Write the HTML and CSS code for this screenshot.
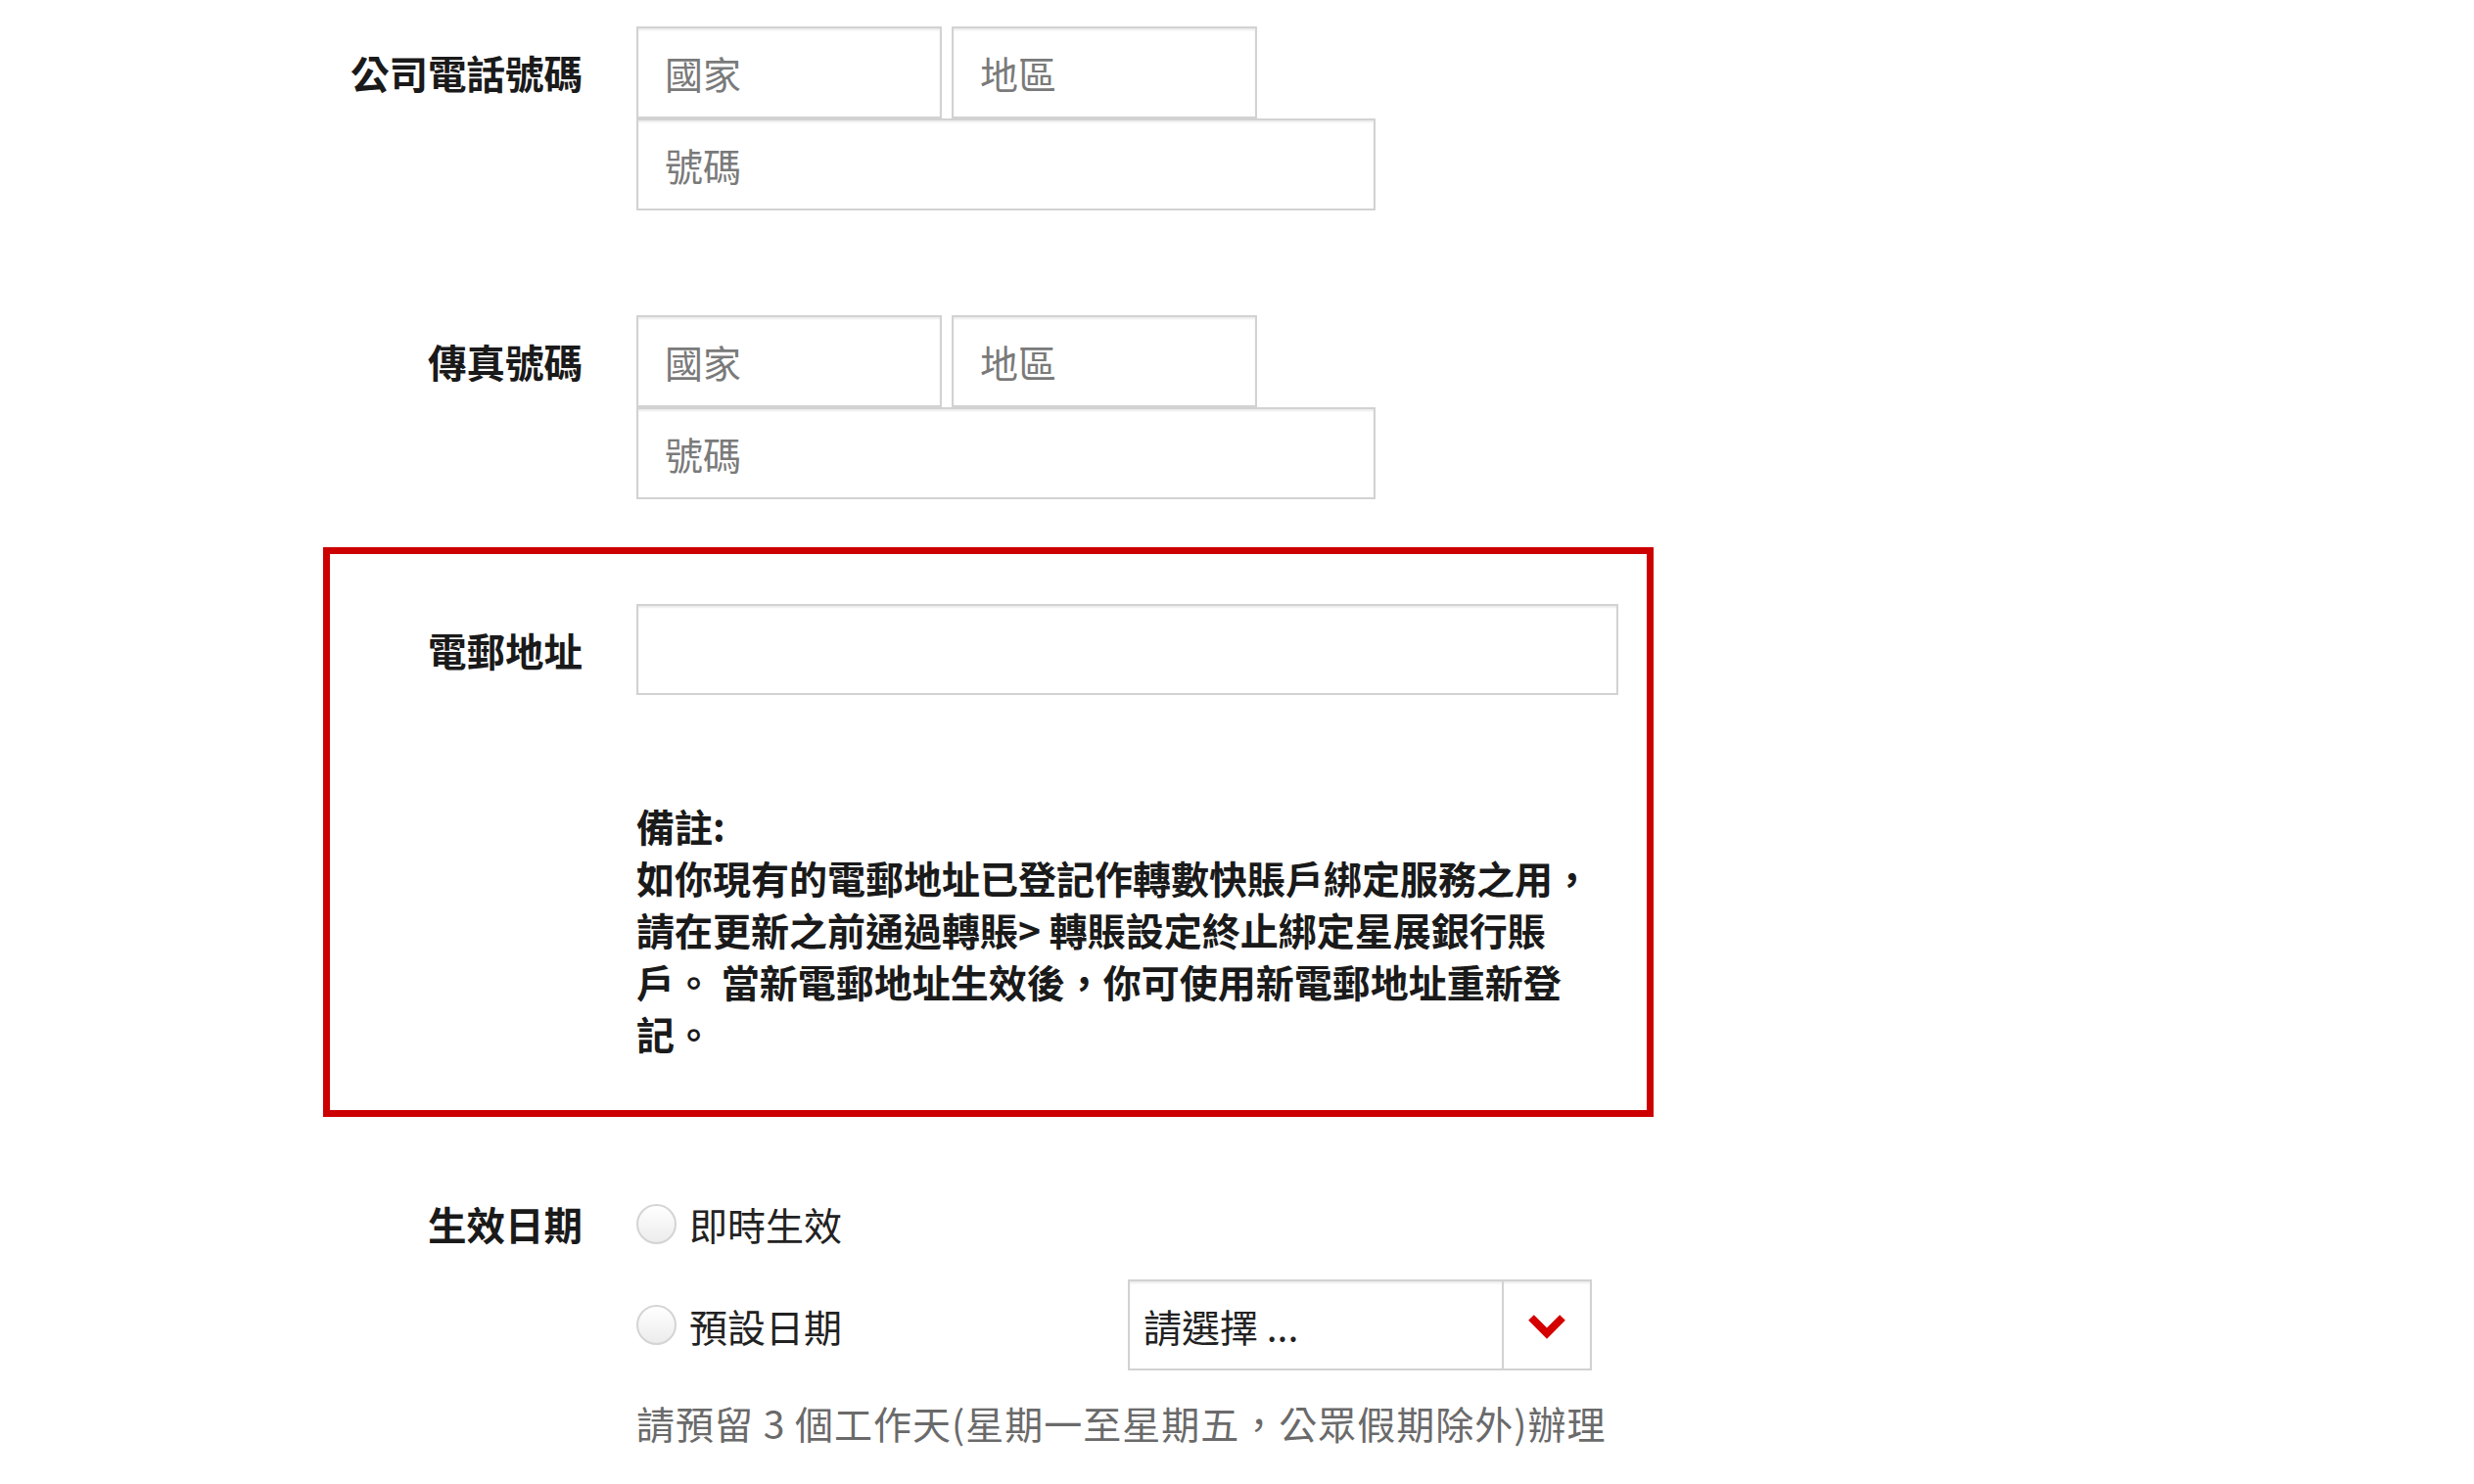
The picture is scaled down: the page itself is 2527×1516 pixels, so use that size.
FILE: index.html
```html
<!DOCTYPE html>
<html lang="zh-Hant">
<head>
  <meta charset="UTF-8" />
  <meta name="viewport" content="width=device-width, initial-scale=1.0"/>
  <title>更新聯絡資料</title>
  <link rel="stylesheet" href="styles.css">
</head>
<body>
  <form class="form">
    <div class="row">
      <label class="row-label">公司電話號碼</label>
      <div class="fields">
        <div class="phone-top">
          <input class="field short" type="text" placeholder="國家" />
          <input class="field short" type="text" placeholder="地區" />
        </div>
        <input class="field medium" type="text" placeholder="號碼" />
      </div>
    </div>

    <div class="row row-fax">
      <label class="row-label">傳真號碼</label>
      <div class="fields">
        <div class="phone-top">
          <input class="field short" type="text" placeholder="國家" />
          <input class="field short" type="text" placeholder="地區" />
        </div>
        <input class="field medium" type="text" placeholder="號碼" />
      </div>
    </div>

    <div class="highlight">
      <div class="row">
        <label class="row-label" for="email">電郵地址</label>
        <div class="fields">
          <input class="field wide" id="email" type="text" />
        </div>
      </div>
      <div class="note">
        備註:<br />
        如你現有的電郵地址已登記作轉數快賬戶綁定服務之用，請在更新之前通過轉賬&gt; 轉賬設定終止綁定星展銀行賬戶。 當新電郵地址生效後，你可使用新電郵地址重新登記。
      </div>
    </div>

    <div class="row row-date">
      <label class="row-label date-label">生效日期</label>
      <div class="fields">
        <label class="option">
          <input type="radio" name="effective" class="radio" />
          <span>即時生效</span>
        </label>
        <div class="option-row">
          <label class="option option-fixed">
            <input type="radio" name="effective" class="radio" />
            <span>預設日期</span>
          </label>
          <div class="select">
            <span class="select-text">請選擇 ...</span>
            <span class="select-arrow">
              <svg width="38" height="28" viewBox="0 0 38 28"><path d="M3 4 L19 20 L35 4" fill="none" stroke="#d40000" stroke-width="8" stroke-linejoin="miter"/></svg>
            </span>
          </div>
        </div>
        <div class="hint">請預留 3 個工作天(星期一至星期五，公眾假期除外)辦理</div>
      </div>
    </div>
  </form>
</body>
</html>
```

FILE: styles.css
```css
* {
  box-sizing: border-box;
}
body {
  margin: 0;
  background: #ffffff;
  font-family: "Noto Sans CJK TC", "Noto Sans", sans-serif;
  font-size: 39px;
  color: #222;
}
.form {
  width: 1359px;
  margin-left: 330px;
  padding-top: 27px;
}
.row {
  display: grid;
  grid-template-columns: 265px 1fr;
  column-gap: 55px;
}
.row-label {
  font-size: 39.5px;
  font-weight: bold;
  text-align: right;
  line-height: 94px;
  white-space: nowrap;
  color: #1a1a1a;
}
.fields {
  display: flex;
  flex-direction: column;
  align-items: flex-start;
}
.phone-top {
  display: flex;
  gap: 10px;
}
.field {
  height: 94px;
  border: 2px solid #d2d2d2;
  box-shadow: inset 0 2px 2px rgba(0, 0, 0, 0.08);
  padding: 0 27px;
  font-family: inherit;
  font-size: 39px;
  color: #333;
  background: #fff;
  outline: none;
}
.field::placeholder {
  color: #7a7a7a;
}
.short {
  width: 312px;
}
.medium {
  width: 755px;
}
.wide {
  width: 1003px;
  height: 93px;
}
.row-fax {
  margin-top: 107px;
}
.highlight {
  margin-top: 49px;
  outline: 7px solid #cc0000;
  outline-offset: -7px;
  padding: 58px 0 59px;
}
.note {
  margin: 106px 0 0 320px;
  width: 25.2em;
  font-weight: bold;
  line-height: 53px;
  color: #1a1a1a;
}
.row-date {
  margin-top: 79px;
}
.date-label {
  line-height: 60px;
}
.option {
  display: flex;
  align-items: center;
  gap: 13px;
  height: 60px;
  color: #222;
}
.radio {
  appearance: none;
  -webkit-appearance: none;
  margin: 0;
  width: 41px;
  height: 41px;
  border-radius: 50%;
  border: 2px solid #d4d4d4;
  background: linear-gradient(#ffffff, #ececec);
}
.option-row {
  display: flex;
  align-items: center;
  margin-top: 27px;
}
.option-fixed {
  width: 502px;
}
.select {
  display: flex;
  width: 474px;
  height: 93px;
  border: 2px solid #d2d2d2;
  box-shadow: inset 0 2px 2px rgba(0, 0, 0, 0.08);
}
.select-text {
  flex: 1;
  display: flex;
  align-items: center;
  padding-left: 14px;
  color: #222;
}
.select-arrow {
  width: 90px;
  border-left: 2px solid #d2d2d2;
  display: flex;
  align-items: center;
  justify-content: center;
  padding-top: 4px;
}
.hint {
  margin-top: 28px;
  line-height: 50px;
  letter-spacing: 1px;
  color: #6a6a6a;
  white-space: nowrap;
}
```
